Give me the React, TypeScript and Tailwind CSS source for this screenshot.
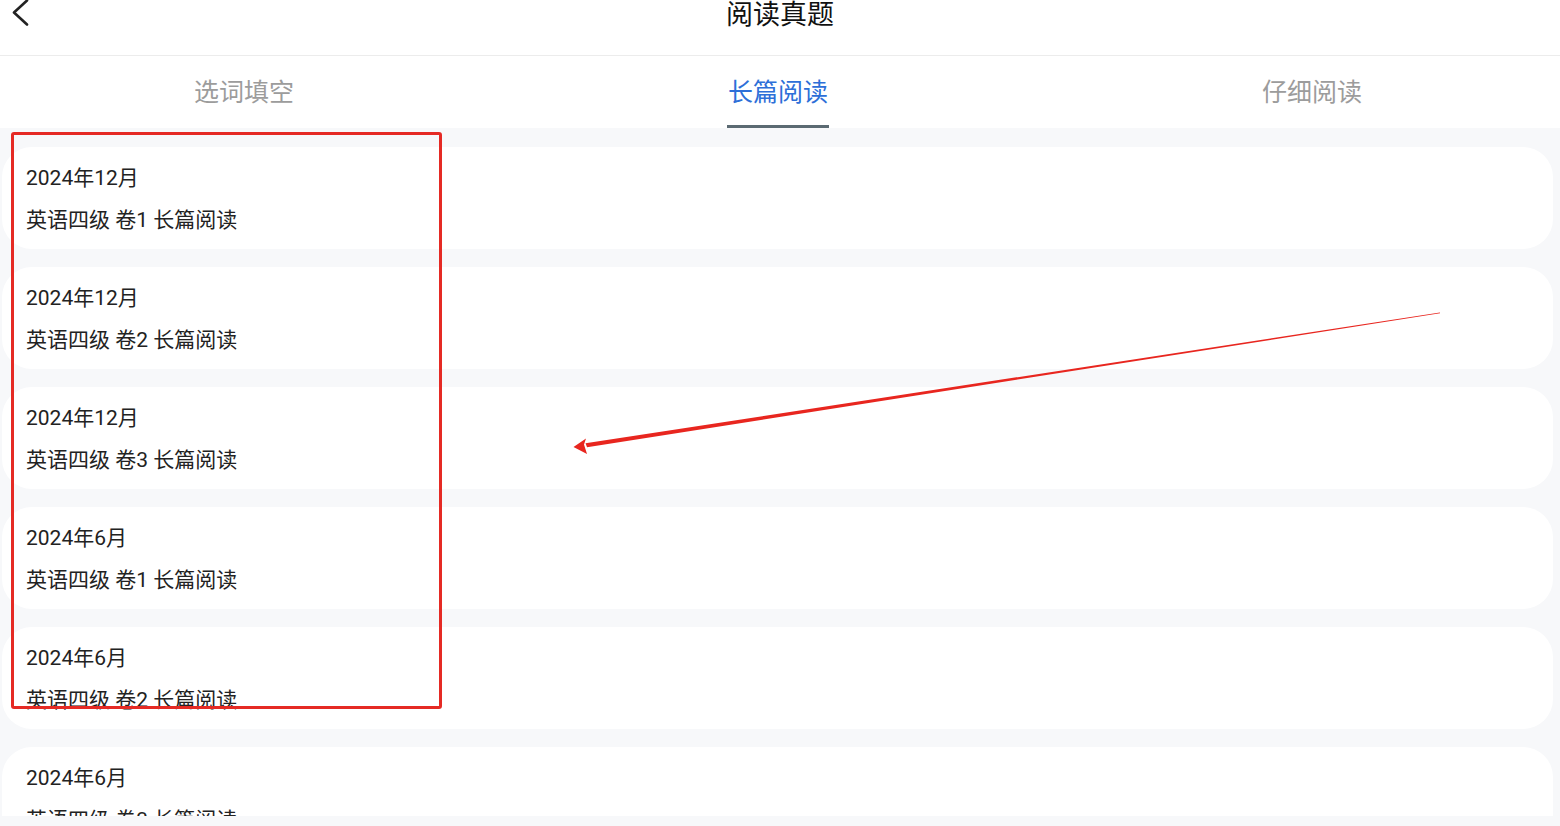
import React from "react";

const items = [
  ["2024年12月", "英语四级 卷1 长篇阅读"],
  ["2024年12月", "英语四级 卷2 长篇阅读"],
  ["2024年12月", "英语四级 卷3 长篇阅读"],
  ["2024年6月", "英语四级 卷1 长篇阅读"],
  ["2024年6月", "英语四级 卷2 长篇阅读"],
  ["2024年6月", "英语四级 卷3 长篇阅读"],
];

export default function App() {
  return (
    <div
      className="relative w-[1560px] h-[826px] overflow-hidden bg-[#f7f8fa]"
      style={{ fontFamily: 'Roboto, "Noto Sans CJK SC", sans-serif' }}
    >
      {/* header */}
      <div className="relative h-[56px] bg-white border-b border-[#ececec] flex justify-center">
        <svg className="absolute left-[10px] top-[-1px]" width="22" height="28" viewBox="0 0 22 28">
          <path d="M17 1.5 L4 13.5 L17 25.5" fill="none" stroke="#222" strokeWidth="2.6" strokeLinecap="round" strokeLinejoin="round" />
        </svg>
        <div className="text-[27px] leading-[27px] mt-[2px] text-[#111]">阅读真题</div>
      </div>
      {/* tabs */}
      <div className="h-[72px] bg-white flex justify-between pl-[194px] pr-[198px]">
        <div className="flex flex-col items-center">
          <div className="text-[25px] leading-[25px] mt-[24px] text-[#9c9c9c]">选词填空</div>
        </div>
        <div className="flex flex-col items-center">
          <div className="text-[25px] leading-[25px] mt-[24px] text-[#2d6fd8]">长篇阅读</div>
          <div className="mt-[20px] h-[3px] w-[102px] bg-[#5b6a72]" />
        </div>
        <div className="flex flex-col items-center">
          <div className="text-[25px] leading-[25px] mt-[24px] text-[#9c9c9c]">仔细阅读</div>
        </div>
      </div>
      {/* list */}
      <div className="h-[688px] overflow-hidden pt-[19px] flex flex-col gap-[18px] pl-[2px] pr-[7px]">
        {items.map(([d, t], i) => (
          <div key={i} className="shrink-0 h-[102px] bg-white rounded-[30px] pl-[24px] pt-[20px] text-[#222]">
            <div className="text-[21px] leading-[23px]">{d}</div>
            <div className="text-[21px] leading-[23px] mt-[19px]">{t}</div>
          </div>
        ))}
      </div>
      {/* annotation overlay */}
      <div className="absolute left-[11px] top-[132px] w-[431px] h-[577px] border-[3px] border-[#e52a24] rounded-[3px] pointer-events-none" />
      <svg className="absolute left-0 top-0 pointer-events-none" width="1560" height="826" viewBox="0 0 1560 826">
        <polygon points="1440,312.6 1440,313.3 587,447.2 585.5,443.2" fill="#e8261f" />
        <polygon points="573.5,447 586,438.5 584,444.5 587,454" fill="#e8261f" />
      </svg>
    </div>
  );
}
